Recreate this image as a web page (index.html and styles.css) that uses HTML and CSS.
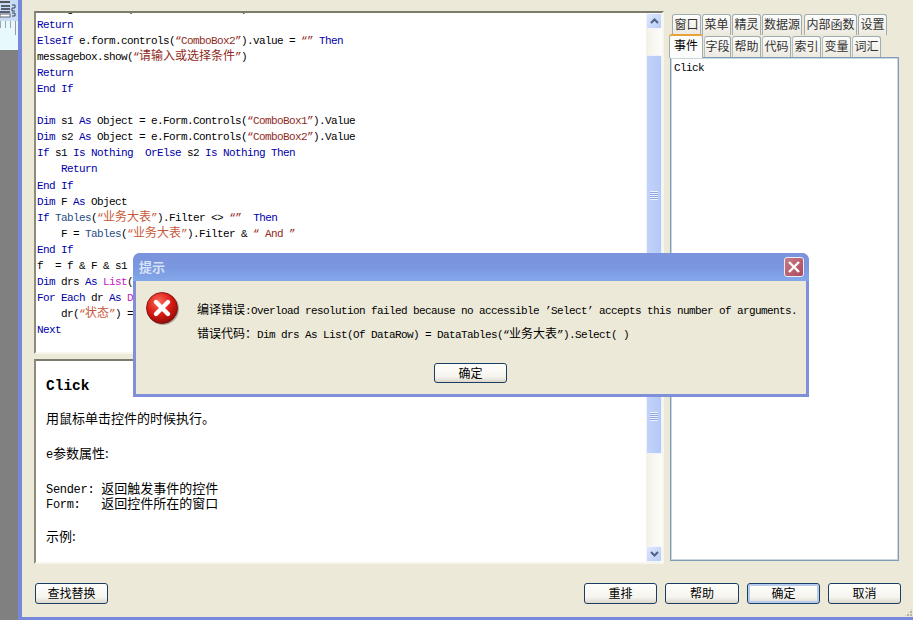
FILE: index.html
```html
<!DOCTYPE html>
<html lang="zh">
<head>
<meta charset="utf-8">
<title>提示</title>
<link rel="stylesheet" href="styles.css">
</head>
<body>
<div class="app">
  <aside class="side">
    <div class="side-tool">
      <svg width="18" height="21" viewBox="0 0 18 21"><rect x="0" y="1" width="10" height="2" fill="#555"/><path d="M1 6h9M1 9h9M0 12h10" stroke="#334" stroke-width="1.4"/><rect x="0" y="14" width="10" height="3" fill="#fff" stroke="#667" stroke-width="1"/><path d="M12 5h3v3h-3v3h3M12 13h3v3h-3" stroke="#345" fill="none"/></svg>
    </div>
    <div class="side-ruler"></div>
  </aside>
  <main class="frame">
    <div class="work">
      <div class="left">
        <section class="pane pane-code">
          <div class="pane-body">
            <div class="code">
<div class="ln">messagebox.show(<span class="s">“<span class="cn">请输入或选择条件</span>”</span>)</div>
<div class="ln"><span class="k">Return</span></div>
<div class="ln"><span class="k">ElseIf</span> e.form.controls(<span class="s">“ComboBox2”</span>).value = <span class="s">“”</span> <span class="k">Then</span></div>
<div class="ln">messagebox.show(<span class="s">“<span class="cn">请输入或选择条件</span>”</span>)</div>
<div class="ln"><span class="k">Return</span></div>
<div class="ln"><span class="k">End If</span></div>
<div class="ln"> </div>
<div class="ln"><span class="k">Dim</span> s1 <span class="k">As</span> Object = e.Form.Controls(<span class="s">“ComboBox1”</span>).Value</div>
<div class="ln"><span class="k">Dim</span> s2 <span class="k">As</span> Object = e.Form.Controls(<span class="s">“ComboBox2”</span>).Value</div>
<div class="ln"><span class="k">If</span> s1 <span class="k">Is Nothing  OrElse</span> s2 <span class="k">Is Nothing Then</span></div>
<div class="ln">    <span class="k">Return</span></div>
<div class="ln"><span class="k">End If</span></div>
<div class="ln"><span class="k">Dim</span> F <span class="k">As</span> Object</div>
<div class="ln"><span class="k">If</span> <span class="t">Tables</span>(<span class="o">“<span class="cn">业务大表</span>”</span>).Filter &lt;&gt; <span class="s">“”</span>  <span class="k">Then</span></div>
<div class="ln">    F = <span class="t">Tables</span>(<span class="o">“<span class="cn">业务大表</span>”</span>).Filter &amp; <span class="s">“ And ”</span></div>
<div class="ln"><span class="k">End If</span></div>
<div class="ln">f  = f &amp; F &amp; s1</div>
<div class="ln"><span class="k">Dim</span> drs <span class="k">As</span> <span class="m">List</span>(Of <span class="m">DataRow</span>)</div>
<div class="ln"><span class="k">For Each</span> dr <span class="k">As</span> <span class="m">DataRow</span></div>
<div class="ln">    dr(<span class="o">“<span class="cn">状态</span>”</span>) =</div>
<div class="ln"><span class="k">Next</span></div>
            </div>
          </div>
          <div class="sb sb-code">
            <div class="sb-btn"><svg width="9" height="6" viewBox="0 0 9 6"><path d="M1 5l3.5-3.5L8 5" fill="none" stroke="#4d6185" stroke-width="2"/></svg></div>
            <div class="sb-thumb"><span class="grip"></span></div>
            <div class="sb-btn"><svg width="9" height="6" viewBox="0 0 9 6"><path d="M1 1l3.5 3.5L8 1" fill="none" stroke="#4d6185" stroke-width="2"/></svg></div>
          </div>
        </section>
        <section class="pane pane-help">
          <div class="pane-body help">
            <h2 class="help-title">Click</h2>
            <p class="hp hp-a"><span class="hc">用鼠标单击控件的时候执行。</span></p>
            <p class="hp hp-b">e<span class="hc">参数属性:</span></p>
            <p class="hp">Sender: <span class="hc">返回触发事件的控件</span></p>
            <p class="hp hp-c">Form:   <span class="hc">返回控件所在的窗口</span></p>
            <p class="hp"><span class="hc">示例:</span></p>
          </div>
          <div class="sb sb-help">
            <div class="sb-btn"><svg width="9" height="6" viewBox="0 0 9 6"><path d="M1 5l3.5-3.5L8 5" fill="none" stroke="#4d6185" stroke-width="2"/></svg></div>
            <div class="sb-thumb sb-thumb-help"><span class="grip"></span></div>
            <div class="sb-track"></div>
            <div class="sb-btn"><svg width="9" height="6" viewBox="0 0 9 6"><path d="M1 1l3.5 3.5L8 1" fill="none" stroke="#4d6185" stroke-width="2"/></svg></div>
          </div>
        </section>
      </div>
      <div class="right">
        <div class="tabs tabs-top">
          <span class="tab">窗口</span><span class="tab">菜单</span><span class="tab">精灵</span><span class="tab tab-3">数据源</span><span class="tab tab-4">内部函数</span><span class="tab">设置</span>
        </div>
        <div class="tabs tabs-bottom">
          <span class="tab tab-on">事件</span><span class="tab tab-2">字段</span><span class="tab">帮助</span><span class="tab">代码</span><span class="tab">索引</span><span class="tab">变量</span><span class="tab">词汇</span>
        </div>
        <div class="listbox">Click</div>
      </div>
    </div>
    <footer class="foot">
      <button class="btn">查找替换</button>
      <div class="foot-right">
        <button class="btn">重排</button>
        <button class="btn btn-wide">帮助</button>
        <button class="btn btn-def">确定</button>
        <button class="btn">取消</button>
      </div>
    </footer>
    <div class="resize"></div>
  </main>

  <div class="dialog">
    <div class="dlg-title">
      <span class="dlg-name">提示</span>
      <span class="dlg-close"><svg width="14" height="14" viewBox="0 0 14 14"><path d="M2 2l10 10M12 2L2 12" stroke="#fff" stroke-width="2.4"/></svg></span>
    </div>
    <div class="dlg-body">
      <div class="dlg-msg">
        <svg class="dlg-icon" width="36" height="36" viewBox="0 0 36 36">
          <defs><radialGradient id="err" cx="40%" cy="30%" r="75%"><stop offset="0" stop-color="#ff6a5c"/><stop offset=".55" stop-color="#d81c14"/><stop offset="1" stop-color="#8a0a08"/></radialGradient></defs>
          <circle cx="19" cy="19" r="16" fill="#8f8d80" opacity=".7"/>
          <circle cx="18" cy="18" r="15.5" fill="url(#err)" stroke="#7a0a08" stroke-width=".8"/>
          <path d="M12 12l12 12M24 12L12 24" stroke="#fff" stroke-width="4.4" stroke-linecap="round"/>
        </svg>
        <div class="dlg-text">
          <div class="dlg-line"><span class="cn">编译错误</span>:Overload resolution failed because no accessible ’Select’ accepts this number of arguments.</div>
          <div class="dlg-line"><span class="cn">错误代码：</span>Dim drs As List(Of DataRow) = DataTables(“<span class="cn">业务大表</span>”).Select( )</div>
        </div>
      </div>
      <div class="dlg-actions"><button class="btn">确定</button></div>
    </div>
  </div>
</div>
</body>
</html>
```

FILE: styles.css
```css
* { box-sizing: border-box; }
html, body { margin: 0; padding: 0; }
body { width: 913px; height: 620px; overflow: hidden; background: #808080; }

.app {
  position: relative;
  display: flex;
  width: 913px;
  height: 620px;
  font-family: "Liberation Mono", monospace;
  color: #000;
}
.cn, .hc, .btn, .tab, .dlg-name {
  font-family: "Noto Sans CJK SC", "Liberation Sans", sans-serif;
  letter-spacing: 0;
}
.cn { font-size: 12px; line-height: 0; }

/* left strip */
.side { width: 18px; flex: none; background: #808080; }
.side-tool { height: 21px; background: #c9dcf6; overflow: hidden; }
.side-tool svg { display: block; }
.side-ruler {
  height: 29px;
  background:
    linear-gradient(#9a9a9a, #9a9a9a) 15px 0 / 1px 14px no-repeat,
    repeating-linear-gradient(90deg, #a0a8a8 0 1px, transparent 1px 5px) 0 0 / 100% 7px no-repeat,
    #e8f9fd;
}

/* main frame */
.frame {
  position: relative;
  flex: 1;
  display: flex;
  flex-direction: column;
  background: #ece9d8;
  border-left: 4px solid #7787d9;
  border-bottom: 3px solid #7787d9;
  padding: 11px 12px 13px;
}
.work {
  flex: 1;
  display: grid;
  grid-template-columns: 630px 1fr;
  column-gap: 5px;
  margin-bottom: 19px;
}
.left { display: flex; flex-direction: column; gap: 5px; }

.pane {
  display: flex;
  background: #fff;
  border: 2px solid;
  border-color: #7d7b6e #f6f5ee #f6f5ee #8d8b7c;
}
.pane-code { height: 343px; }
.pane-help { height: 205px; }
.pane-body { flex: 1; min-width: 0; overflow: hidden; }

.code {
  margin-top: -12px;
  padding-left: 1px;
  font-size: 11px;
  letter-spacing: -0.6px;
  line-height: 16.05px;
}
.ln { height: 16.05px; white-space: pre; }
.k { color: #0000a8; }
.s { color: #8f2a22; }
.o { color: #c8583a; }
.t { color: #1f4f86; }
.m { color: #c818c8; }

/* scrollbars */
.sb {
  width: 16px;
  flex: none;
  display: flex;
  flex-direction: column;
  background: linear-gradient(90deg, #f3f1e6, #fdfdfa);
}
.sb-btn {
  height: 16px;
  flex: none;
  display: flex;
  align-items: center;
  justify-content: center;
  background: linear-gradient(135deg, #dfe8fd, #b9cbf6);
  border: 1px solid #f2f5fd;
  border-radius: 2px;
}
.sb-thumb {
  flex: 1;
  margin: 24px 0 0;
  display: flex;
  align-items: center;
  justify-content: center;
  background: linear-gradient(90deg, #c2d2fb, #b5c8f6);
  border: 1px solid #eef2fd;
  border-radius: 2px;
}
.sb-code .sb-thumb { margin: 26px 0 0; }
.sb-thumb-help { flex: none; height: 75px; margin: 2px 0 0; }
.sb-track { flex: 1; }
.grip {
  width: 8px;
  height: 9px;
  background: repeating-linear-gradient(#eef3ff 0 1px, #8ea6dc 1px 2px);
}

/* help */
.help { padding: 17px 0 0 10px; }
.help-title {
  margin: 0 0 19px;
  font: bold 14.5px/16px "Liberation Mono", monospace;
  letter-spacing: 0;
}
.hp {
  margin: 0;
  font-size: 12px;
  letter-spacing: -0.3px;
  line-height: 15px;
  white-space: pre;
}
.hc { font-size: 13px; line-height: 0; }
.hp-a { margin-bottom: 20px; }
.hp-b { margin-bottom: 20px; }
.hp-c { margin-bottom: 18px; }

/* right */
.right { display: flex; flex-direction: column; min-width: 0; }
.tabs { display: flex; height: 21px; flex: none; gap: 1px; position: relative; }
.tabs-top { margin-top: 3px; padding-left: 3px; }
.tabs-bottom { margin-top: 1px; height: 21px; }
.tab {
  width: 29px;
  height: 21px;
  padding-bottom: 3px;
  display: flex;
  align-items: center;
  justify-content: center;
  font-size: 12px;
  color: #333;
  background: linear-gradient(#fdfdfc, #ece9df);
  border: 1px solid #a0acb0;
  border-bottom: 0;
  border-radius: 3px 3px 0 0;
}
.tab-2 { width: 27px; }
.tab-3 { width: 40px; margin-right: 1px; }
.tab-4 { width: 53px; }
.tab-on {
  width: 34px;
  height: 24px;
  margin-top: -2px;
  margin-right: 0;
  color: #000;
  background: #fcfcfb;
  border-top: 2px solid #e7a33a;
  position: relative;
  z-index: 1;
  padding-bottom: 6px;
}
.tabs-bottom .tab:not(.tab-on) { border-left-color: #b5bfc2; }
.listbox {
  flex: 1;
  margin: 0 2px 3px 1px;
  padding: 3px 3px 2px;
  background: #fff;
  border: 1px solid #7f9db9;
  box-shadow: inset 0 0 0 1px #c9d6dd;
  font-size: 11px;
  letter-spacing: -0.6px;
  line-height: 14px;
}

/* buttons */
.btn {
  width: 73px;
  height: 21px;
  padding: 0 0 2px;
  font-size: 12px;
  line-height: 18px;
  color: #000;
  background: linear-gradient(#fefefc, #f5f4ee 70%, #dcd8cb);
  border: 1px solid #1b3f64;
  border-radius: 3px;
}
.btn-wide { width: 74px; }
.btn-def { box-shadow: inset 0 0 0 2px #b6cbee; }
.foot { display: flex; justify-content: space-between; padding-left: 1px; }
.foot-right { display: flex; gap: 8px; }
.resize {
  position: absolute;
  right: 0;
  bottom: 0;
  width: 9px;
  height: 9px;
  background: radial-gradient(circle at 1px 1px, #b5b2a0 1px, transparent 1.2px) 0 0 / 3px 3px;
  clip-path: polygon(100% 0, 100% 100%, 0 100%);
}

/* dialog */
.dialog {
  position: absolute;
  left: 133px;
  top: 253px;
  width: 676px;
  height: 144px;
  display: flex;
  flex-direction: column;
  background: #7f8fd9;
  border-radius: 7px 7px 0 0;
  padding: 0 3px 3px;
}
.dlg-title {
  height: 28px;
  flex: none;
  margin: 0 -3px;
  padding: 0 5px 1px 6px;
  display: flex;
  align-items: center;
  justify-content: space-between;
  border-radius: 7px 7px 0 0;
  background: linear-gradient(#7b93dc, #7a97e0 50%, #83a8ea);
}
.dlg-name { font-size: 13px; font-weight: 700; color: #d6e2f6; }
.dlg-close {
  width: 20px;
  height: 20px;
  display: flex;
  align-items: center;
  justify-content: center;
  background: linear-gradient(135deg, #c97a86, #ad4a5c);
  border: 1px solid #e8edf8;
  border-radius: 3px;
}
.dlg-body {
  flex: 1;
  background: #ece9d8;
  padding: 12px 0 0 10px;
  display: flex;
  flex-direction: column;
}
.dlg-msg { display: flex; }
.dlg-icon { flex: none; margin-left: -2px; margin-top: -3px; }
.dlg-text { margin: 10px 0 0 17px; }
.dlg-line {
  height: 24px;
  font-size: 11px;
  letter-spacing: -0.6px;
  line-height: 16px;
  white-space: pre;
}
.dlg-actions { display: flex; justify-content: center; margin: 12px 0 0 -11px; }
.dlg-actions .btn { height: 20px; }
```
